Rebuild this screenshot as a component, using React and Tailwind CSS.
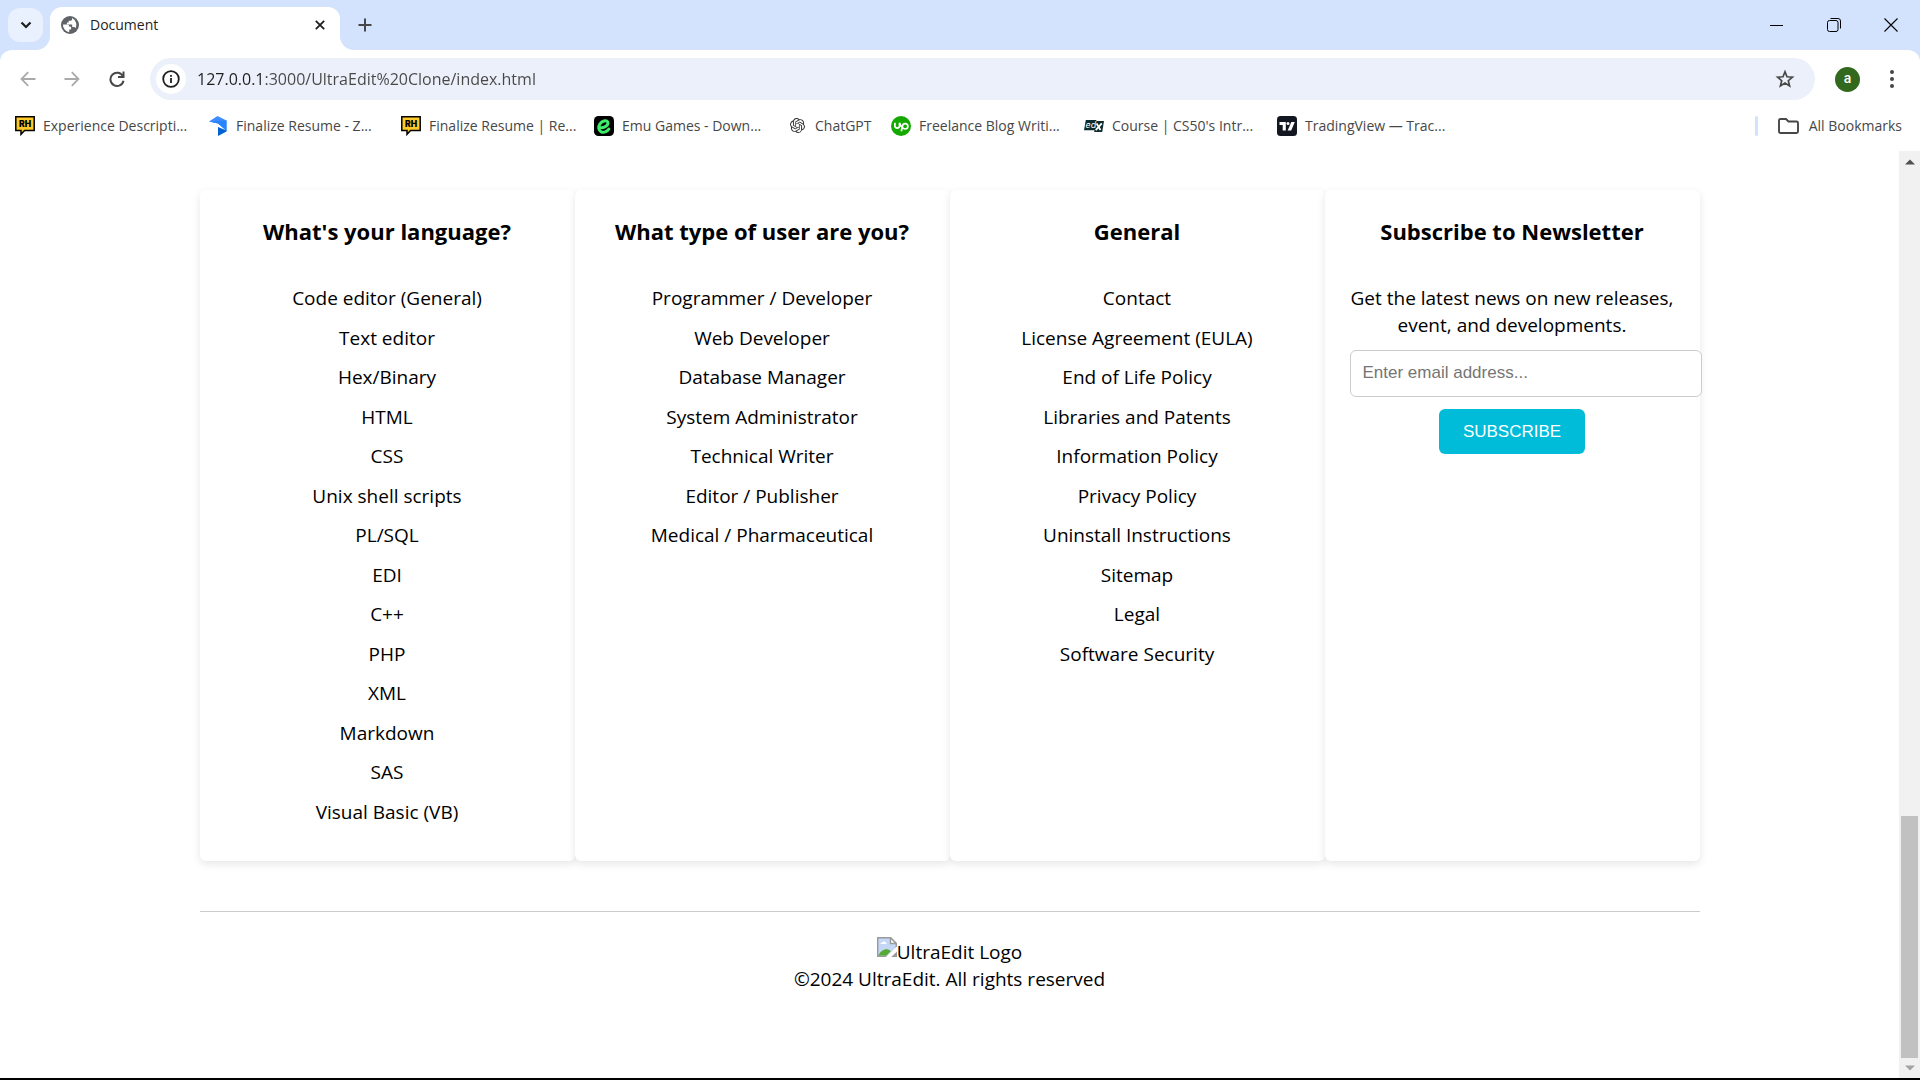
import React from "react";

const SANS = "font-['Open_Sans','Noto_Sans',sans-serif]";
const ARIAL = "font-['Liberation_Sans',Arial,sans-serif]";

function RhIcon() {
  return (
    <svg viewBox="0 0 20 20" className="size-5" aria-hidden="true">
      <path d="M0.8 0.8H19.2V14.4H9.6L6 18.3V14.4H0.8Z" fill="#ffc929" stroke="#000" strokeWidth="1.5" />
      <text x="10" y="10.9" textAnchor="middle" fontSize="8.5" fontWeight="900" fontFamily="Inter, sans-serif" fill="#000">RH</text>
    </svg>
  );
}

function RibbonIcon() {
  return (
    <svg viewBox="0 0 20 20" className="size-5" aria-hidden="true">
      <path d="M1 5.5 9.5 0 18.5 4.5V15L10 7.5Z" fill="#3f8cff" />
      <path d="M18.5 4.5V15L12.5 9.5 10 7.5 1 5.5Z" fill="#2684fc" />
      <path d="M10 11V20L18.5 15.5 18.4 14.6Z" fill="#0062d1" />
    </svg>
  );
}

function EmuIcon() {
  return (
    <svg viewBox="0 0 20 20" className="size-5" aria-hidden="true">
      <rect width="20" height="20" rx="4.5" fill="#000" />
      <path d="M6.2 11.6c3.5.4 7.6-1.600 7.800-4.300.1-2-1.900-2.900-4-2.300-3.300.9-5.700 4.300-5.200 7.600.5 3.200 3.600 4.300 6.500 3.300 1.600-.6 2.800-1.600 3.600-2.900" fill="none" stroke="#3df06b" strokeWidth="3" strokeLinecap="round" />
    </svg>
  );
}

function ChatIcon() {
  return (
    <svg viewBox="0 0 24 24" className="size-[15px]" fill="#333" aria-hidden="true">
      <path d="M22.2819 9.8211a5.9847 5.9847 0 0 0-.5157-4.9108 6.0462 6.0462 0 0 0-6.5098-2.9A6.0651 6.0651 0 0 0 4.9807 4.1818a5.9847 5.9847 0 0 0-3.9977 2.9 6.0462 6.0462 0 0 0 .7427 7.0966 5.98 5.98 0 0 0 .511 4.9107 6.051 6.051 0 0 0 6.5146 2.9001A5.9847 5.9847 0 0 0 13.2599 24a6.0557 6.0557 0 0 0 5.7718-4.2058 5.9894 5.9894 0 0 0 3.9977-2.9001 6.0557 6.0557 0 0 0-.7475-7.0729zm-9.022 12.6081a4.4755 4.4755 0 0 1-2.8764-1.0408l.1419-.0804 4.7783-2.7582a.7948.7948 0 0 0 .3927-.6813v-6.7369l2.02 1.1686a.071.071 0 0 1 .038.052v5.5826a4.504 4.504 0 0 1-4.4945 4.4944zm-9.6607-4.1254a4.4708 4.4708 0 0 1-.5346-3.0137l.142.0852 4.783 2.7582a.7712.7712 0 0 0 .7806 0l5.8428-3.3685v2.3324a.0804.0804 0 0 1-.0332.0615L9.74 19.9502a4.4992 4.4992 0 0 1-6.1408-1.6464zM2.3408 7.8956a4.485 4.485 0 0 1 2.3655-1.9728V11.6a.7664.7664 0 0 0 .3879.6765l5.8144 3.3543-2.0201 1.1685a.0757.0757 0 0 1-.071 0l-4.8303-2.7865A4.504 4.504 0 0 1 2.3408 7.872zm16.5963 3.8558L13.1038 8.364 15.1192 7.2a.0757.0757 0 0 1 .071 0l4.8303 2.7913a4.4944 4.4944 0 0 1-.6765 8.1042v-5.6772a.79.79 0 0 0-.407-.667zm2.0107-3.0231l-.142-.0852-4.7735-2.7818a.7759.7759 0 0 0-.7854 0L9.409 9.2297V6.8974a.0662.0662 0 0 1 .0284-.0615l4.8303-2.7866a4.4992 4.4992 0 0 1 6.6802 4.66zM8.3065 12.863l-2.02-1.1638a.0804.0804 0 0 1-.038-.0567V6.0742a4.4992 4.4992 0 0 1 7.3757-3.4537l-.142.0805L8.704 5.459a.7948.7948 0 0 0-.3927.6813zm1.0976-2.3654l2.602-1.4998 2.6069 1.4998v2.9994l-2.5974 1.4997-2.6067-1.4997Z" />
    </svg>
  );
}

function UpIcon() {
  return (
    <svg viewBox="0 0 20 20" className="size-5" aria-hidden="true">
      <circle cx="10" cy="10" r="10" fill="#14a800" />
      <path d="M3.900 6.800v3a2.300 2.300 0 0 0 4.600 0v-3c.7 2.600 1.900 4.300 3.400 5.200" fill="none" stroke="#fff" strokeWidth="1.700" />
      <path d="M10.300 15.200l1.200-5.400a2.700 2.700 0 1 1 2.600 3.200c-1.200 0-2.200-.7-3-1.700" fill="none" stroke="#fff" strokeWidth="1.700" />
    </svg>
  );
}

function EdxIcon() {
  return (
    <svg viewBox="0 0 20 20" className="size-5" aria-hidden="true">
      <path d="M1.800 4H12.500L12.200 5H20L18.200 16H10.200L10.500 14.300H0Z" fill="#0c2b2d" />
      <text x="1.500" y="12" fontSize="9" fontStyle="italic" fontFamily="Inter, sans-serif" fill="#fff">ed</text>
      <path d="M12.600 7.500 16.500 14M17.800 7.300 11.700 14.200" stroke="#fff" strokeWidth="1.800" />
    </svg>
  );
}

function TvIcon() {
  return (
    <svg viewBox="0 0 20 20" className="size-5" aria-hidden="true">
      <rect width="20" height="20" rx="3.500" fill="#131722" />
      <path d="M2.500 6H8.800V14.500H5.700V9H2.500Z" fill="#fff" />
      <circle cx="11" cy="7.500" r="1.500" fill="#fff" />
      <path d="M14.300 6H17.800L14.200 14.500H10.700Z" fill="#fff" />
    </svg>
  );
}

const BOOKMARKS = [
  { label: "Experience Descripti...", Icon: RhIcon },
  { label: "Finalize Resume - Z...", Icon: RibbonIcon },
  { label: "Finalize Resume | Re...", Icon: RhIcon },
  { label: "Emu Games - Down...", Icon: EmuIcon },
  { label: "ChatGPT", Icon: ChatIcon, short: true },
  { label: "Freelance Blog Writi...", Icon: UpIcon },
  { label: "Course | CS50's Intr...", Icon: EdxIcon },
  { label: "TradingView — Trac...", Icon: TvIcon },
];

const COLUMNS = [
  {
    title: "What's your language?",
    items: ["Code editor (General)", "Text editor", "Hex/Binary", "HTML", "CSS", "Unix shell scripts", "PL/SQL", "EDI", "C++", "PHP", "XML", "Markdown", "SAS", "Visual Basic (VB)"],
  },
  {
    title: "What type of user are you?",
    items: ["Programmer / Developer", "Web Developer", "Database Manager", "System Administrator", "Technical Writer", "Editor / Publisher", "Medical / Pharmaceutical"],
  },
  {
    title: "General",
    items: ["Contact", "License Agreement (EULA)", "End of Life Policy", "Libraries and Patents", "Information Policy", "Privacy Policy", "Uninstall Instructions", "Sitemap", "Legal", "Software Security"],
  },
];

function TabStrip() {
  return (
    <header className="flex h-[50px] items-center bg-[#d3e3fd]">
      <button aria-label="Search tabs" className="ml-2 flex h-[34px] w-[35px] items-center justify-center rounded-xl bg-[#e9f1fe]">
        <svg viewBox="0 0 12 8" className="h-2 w-3" aria-hidden="true">
          <path d="M1.500 1.500 6 6 10.500 1.500" fill="none" stroke="#1f1f1f" strokeWidth="2.200" />
        </svg>
      </button>
      <div className="relative ml-[7px] flex h-[43px] w-[290px] items-center self-end rounded-t-xl bg-white pr-3 pb-[7px] pl-[11px]">
        <svg viewBox="0 0 14 14" className="absolute bottom-0 -left-3.5 size-3.5" aria-hidden="true">
          <path d="M14 0V14H0A14 14 0 0 0 14 0Z" fill="#fff" />
        </svg>
        <svg viewBox="0 0 14 14" className="absolute -right-3.5 bottom-0 size-3.5" aria-hidden="true">
          <path d="M0 0V14H14A14 14 0 0 1 0 0Z" fill="#fff" />
        </svg>
        <svg viewBox="0 0 18 18" className="size-[18px]" aria-hidden="true">
          <circle cx="9" cy="9" r="9" fill="#5f6368" />
          <path d="M2 8.500h3.500c1.800 0 2.800.6 2.800 2.200h1.800v2.700H8.200v2.800A7.300 7.300 0 0 1 2 8.500Z" fill="#fff" />
          <path d="M11 2.100v1.100c0 1-.8 1.500-1.600 1.500H7.700v1.800H5.900v1.900h5.300v2.600h1.500c.8 0 1.400.5 1.700 1.200A7.200 7.200 0 0 0 11 2.100Z" fill="#fff" />
        </svg>
        <span className="ml-[11px] flex-1 text-sm text-[#1f1f1f]">Document</span>
        <button aria-label="Close tab" className="flex size-4 items-center justify-center">
          <svg viewBox="0 0 10 10" className="size-2.5" aria-hidden="true">
            <path d="M.8.8 9.200 9.200M9.200.8.8 9.200" stroke="#1f1f1f" strokeWidth="1.800" />
          </svg>
        </button>
      </div>
      <button aria-label="New tab" className="ml-[18px] flex size-[14px] items-center justify-center">
        <svg viewBox="0 0 14 14" className="size-[14px]" aria-hidden="true">
          <path d="M7 .5V13.500M.5 7H13.500" stroke="#474747" strokeWidth="2" />
        </svg>
      </button>
      <div className="mr-px ml-auto flex">
        <button aria-label="Minimize" className="flex h-10 w-[57px] items-center justify-center">
          <svg viewBox="0 0 14 14" className="size-[14px]" aria-hidden="true"><path d="M0 7.500H13" stroke="#000" /></svg>
        </button>
        <button aria-label="Restore" className="flex h-10 w-[57px] items-center justify-center">
          <svg viewBox="0 0 14 14" className="size-[14px]" fill="none" stroke="#000" aria-hidden="true">
            <rect x=".5" y="2.500" width="10.500" height="11" rx="2" />
            <path d="M3.500.5H11a2.500 2.500 0 0 1 2.500 2.500V10.500" />
          </svg>
        </button>
        <button aria-label="Close" className="flex h-10 w-[57px] items-center justify-center">
          <svg viewBox="0 0 14 14" className="size-[14px]" aria-hidden="true"><path d="M.5.5 13.500 13.500M13.500.5.5 13.500" stroke="#000" strokeWidth="1.100" /></svg>
        </button>
      </div>
    </header>
  );
}

function Toolbar() {
  return (
    <div className="bg-[#d3e3fd]">
      <div className="flex items-center rounded-t-xl bg-white pt-2 pr-5 pl-5">
        <button aria-label="Back" className="flex size-4 items-center justify-center">
          <svg viewBox="0 0 16 16" className="size-4" fill="none" stroke="#aaa" strokeWidth="1.800" aria-hidden="true">
            <path d="M15.500 8H2M8.200 1.200 1.500 8 8.200 14.800" />
          </svg>
        </button>
        <button aria-label="Forward" className="ml-7 flex size-4 items-center justify-center">
          <svg viewBox="0 0 16 16" className="size-4" fill="none" stroke="#aaa" strokeWidth="1.800" aria-hidden="true">
            <path d="M.5 8H14M7.800 1.200 14.500 8 7.800 14.800" />
          </svg>
        </button>
        <button aria-label="Reload" className="ml-[29px] flex size-4 items-center justify-center">
          <svg viewBox="0 0 16 16" className="size-4" fill="none" stroke="#474747" strokeWidth="2" aria-hidden="true">
            <path d="M14 5.500A6.600 6.600 0 1 0 14.500 9.700" />
            <path d="M14.500.5V6H9" />
          </svg>
        </button>
        <div className="ml-[25px] flex h-[42px] flex-1 items-center rounded-full bg-[#ecf0fa] pr-5 pl-1.5">
          <button aria-label="View site information" className="flex size-[30px] items-center justify-center rounded-full bg-white">
            <svg viewBox="0 0 18 18" className="size-[18px]" aria-hidden="true">
              <circle cx="9" cy="9" r="7.800" fill="none" stroke="#1f1f1f" strokeWidth="1.800" />
              <path d="M9 8V13M9 5V6.800" stroke="#1f1f1f" strokeWidth="1.800" />
            </svg>
          </button>
          <input
            aria-label="Address"
            defaultValue="127.0.0.1:3000/UltraEdit%20Clone/index.html"
            className="ml-[11px] min-w-0 flex-1 bg-[linear-gradient(90deg,#1f1f1f_68px,#474747_68px)] bg-clip-text text-base text-transparent outline-none"
          />
          <button aria-label="Bookmark this tab" className="flex size-5 items-center justify-center">
            <svg viewBox="0 0 20 20" className="size-5" fill="none" stroke="#474747" strokeWidth="1.700" aria-hidden="true">
              <path d="M10 2.800 12 7.800 17.400 8.200 13.300 11.700 14.600 17 10 14.100 5.400 17 6.700 11.700 2.600 8.200 8 7.800Z" />
            </svg>
          </button>
        </div>
        <button aria-label="Profile" className="ml-5 flex size-[25px] items-center justify-center rounded-full bg-[#33691e] pb-0.5 font-[Roboto,sans-serif] text-sm font-medium text-white">a</button>
        <button aria-label="Menu" className="ml-6 flex w-4 items-center justify-center">
          <svg viewBox="0 0 4 18" className="h-[18px] w-1" fill="#474747" aria-hidden="true">
            <circle cx="2" cy="2" r="2" /><circle cx="2" cy="9" r="2" /><circle cx="2" cy="16" r="2" />
          </svg>
        </button>
      </div>
    </div>
  );
}

function BookmarksBar() {
  return (
    <nav aria-label="Bookmarks" className="flex h-[51px] items-center pr-[18px] pl-[15px] text-sm text-[#474747]">
      {BOOKMARKS.map(({ label, Icon, short }, i) => (
        <a key={i} href="#" className={short ? "flex w-[104px] items-center gap-2 whitespace-nowrap" : "flex w-[193px] items-center gap-2 whitespace-nowrap"}>
          <span className="flex size-5 shrink-0 items-center justify-center"><Icon /></span>
          {label}
        </a>
      ))}
      <span className="mr-5 ml-auto h-5 w-[3px] rounded-full bg-[#d3e3fd]" />
      <button className="flex items-center gap-2.5">
        <svg viewBox="0 0 21 16" className="h-4 w-[21px]" aria-hidden="true">
          <path d="M2.500 1H8L10.500 3.500H18.500A1.500 1.500 0 0 1 20 5V13.500A1.500 1.500 0 0 1 18.500 15H2.500A1.500 1.500 0 0 1 1 13.500V2.500A1.500 1.500 0 0 1 2.500 1Z" fill="none" stroke="#474747" strokeWidth="1.900" />
        </svg>
        All Bookmarks
      </button>
    </nav>
  );
}

function Card({ title, children }) {
  return (
    <section className="rounded-md bg-white px-[25px] pt-[25px] pb-[23px] text-center shadow-[0_3px_8px_rgba(0,0,0,0.1)]">
      <h3 className="mb-[38px] text-[22px] leading-8 font-bold">{title}</h3>
      {children}
    </section>
  );
}

function BrokenImage() {
  return (
    <svg viewBox="0 0 20 20" className="size-5" aria-hidden="true">
      <path d="M.7.7H13.500L19.300 6.500V12L11 19.300H.7Z" fill="#c5d7f7" stroke="#9a9a9a" strokeWidth="1.400" />
      <path d="M13.500.7V6.500H19.300Z" fill="#fff" stroke="#9a9a9a" strokeWidth="1.400" />
      <path d="M3.500 7a1.500 1.500 0 0 1 1.800-1.500 2 2 0 0 1 3.600.3A1.300 1.300 0 0 1 9.500 7Z" fill="#fff" />
      <path d="M1.400 18.600C3 14.500 7 12 10 12.300c2 .2 3 1 3.800 2L9.500 18.600Z" fill="#55aa33" />
      <path d="M20 9.500V13L12.500 20H8.800Z" fill="#fff" />
      <path d="M20 14.500V20H14.200Z" fill="#9a9a9a" />
    </svg>
  );
}

function ScrollBar() {
  return (
    <div className="flex w-[21px] flex-col items-center bg-[#f1f1f1]" aria-hidden="true">
      <div className="flex h-[21px] items-center justify-center">
        <svg viewBox="0 0 10 6" className="h-1.5 w-2.5"><path d="M0 5.500 5 .5 10 5.500Z" fill="#505050" /></svg>
      </div>
      <div className="flex-1" />
      <div className="h-[242px] w-[17px] bg-[#c1c1c1]" />
      <div className="flex h-5 items-center justify-center">
        <svg viewBox="0 0 10 6" className="h-1.5 w-2.5"><path d="M0 .5 5 5.500 10 .5Z" fill="#a3a3a3" /></svg>
      </div>
    </div>
  );
}

export default function App() {
  return (
    <div className={`flex min-h-screen flex-col border-b-2 border-black bg-white text-black ${SANS}`}>
      <TabStrip />
      <Toolbar />
      <BookmarksBar />
      <div className="flex flex-1">
        <main className="flex-1 pt-[39px] text-[19px] leading-[27px]">
          <div className="mx-auto max-w-[1500px]">
            <div className="grid grid-cols-4">
              {COLUMNS.map(({ title, items }) => (
                <Card key={title} title={title}>
                  <ul>
                    {items.map((item) => (
                      <li key={item} className="odd:mb-[13px] even:mb-3"><a href="#">{item}</a></li>
                    ))}
                  </ul>
                </Card>
              ))}
              <Card title="Subscribe to Newsletter">
                <p>Get the latest news on new releases, event, and developments.</p>
                <form className={ARIAL}>
                  <input
                    type="email"
                    aria-label="Email address"
                    placeholder="Enter email address..."
                    className="mt-[11px] box-content block h-5 w-full rounded-md border border-[#ccc] bg-white pt-3 pr-[13px] pb-[13px] pl-3 text-[17px] leading-5 placeholder:text-[#757575]"
                  />
                  <button type="button" className="mt-3 h-[45px] rounded-md bg-[#00bcd9] px-6 text-[17px] text-white">SUBSCRIBE</button>
                </form>
              </Card>
            </div>
            <footer className="mt-[50px] border-t border-[#ccc] pt-[25px] text-center">
              <div className="flex items-start justify-center">
                <BrokenImage />
                <span className="mt-0.5">UltraEdit Logo</span>
              </div>
              <p>©2024 UltraEdit. All rights reserved</p>
            </footer>
          </div>
        </main>
        <ScrollBar />
      </div>
    </div>
  );
}
